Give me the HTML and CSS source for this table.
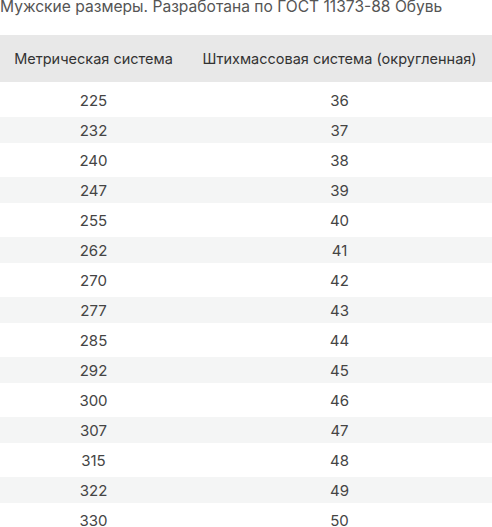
FILE: index.html
```html
<!DOCTYPE html>
<html lang="ru">
<head>
<meta charset="utf-8">
<link rel="stylesheet" href="styles.css">
</head>
<body>
<p class="title">Мужские размеры. Разработана по ГОСТ 11373-88 Обувь</p>
<table class="sizes">
<thead>
<tr><th class="c1">Метрическая система</th><th class="c2">Штихмассовая система (округленная)</th></tr>
</thead>
<tbody>
<tr><td>225</td><td>36</td></tr>
<tr><td>232</td><td>37</td></tr>
<tr><td>240</td><td>38</td></tr>
<tr><td>247</td><td>39</td></tr>
<tr><td>255</td><td>40</td></tr>
<tr><td>262</td><td>41</td></tr>
<tr><td>270</td><td>42</td></tr>
<tr><td>277</td><td>43</td></tr>
<tr><td>285</td><td>44</td></tr>
<tr><td>292</td><td>45</td></tr>
<tr><td>300</td><td>46</td></tr>
<tr><td>307</td><td>47</td></tr>
<tr><td>315</td><td>48</td></tr>
<tr><td>322</td><td>49</td></tr>
<tr><td>330</td><td>50</td></tr>
</tbody>
</table>
</body>
</html>
```
FILE: styles.css
```css
html, body {
  margin: 0;
  padding: 0;
  background: #fff;
}
body {
  font-family: Inter, "Noto Sans", "Liberation Sans", sans-serif;
  color: #444;
  overflow: hidden;
}
.title {
  margin: -3px 0 0 0;
  font-size: 15.6px;
  line-height: 20px;
  color: #555;
  white-space: nowrap;
}
.sizes {
  margin-top: 18px;
  width: 492px;
  border-collapse: separate;
  border-spacing: 0;
  table-layout: fixed;
}
.sizes .c1 { width: 187px; }
.sizes th {
  background: #e8e8e8;
  height: 47px;
  padding: 0;
  font-weight: 400;
  font-size: 14.5px;
  color: #333;
  text-align: center;
  white-space: nowrap;
}
.sizes td {
  height: 26px;
  padding: 0;
  border-top: 2px solid #fff;
  border-bottom: 2px solid #fff;
  text-align: center;
  font-size: 15px;
  color: #444;
}
.sizes tbody tr:first-child td {
  border-top-width: 5px;
}
.sizes tbody tr:nth-child(even) td {
  background: #f4f5f5;
}
```
